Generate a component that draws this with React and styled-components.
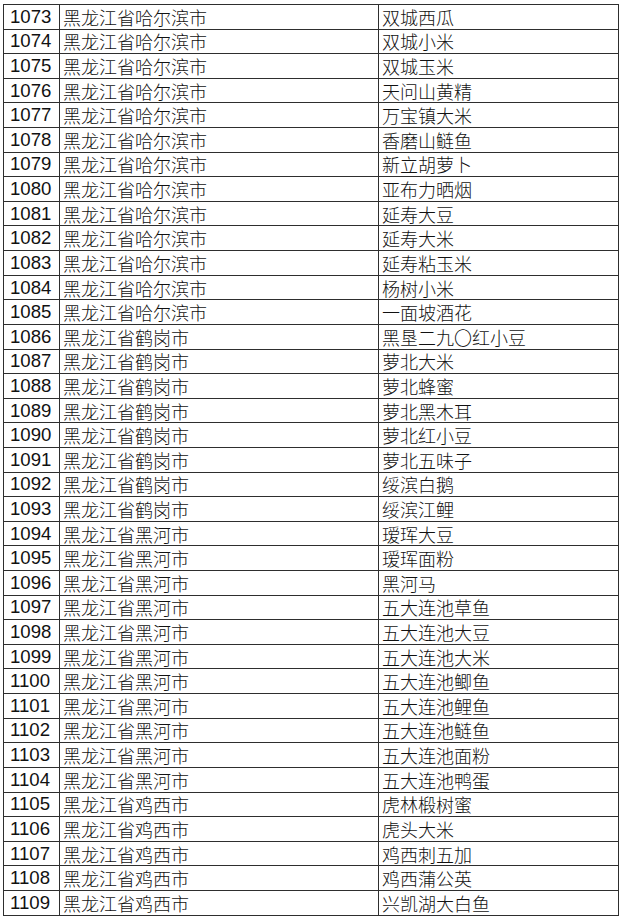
import React from 'react';
import styled, { createGlobalStyle } from 'styled-components';

const GlobalStyle = createGlobalStyle`
  html, body {
    margin: 0;
    padding: 0;
    background: #ffffff;
  }
  body {
    font-family: "Noto Sans CJK SC", "Liberation Sans", sans-serif;
    color: #111;
  }
`;

const Page = styled.div`
  padding: 4px 0 0 3px;
`;

const Table = styled.table`
  border-collapse: collapse;
  table-layout: fixed;
  width: 615px;
`;

const Row = styled.tr`
  height: 24.62px;
`;

const Cell = styled.td`
  border: 1px solid #2e2e2e;
  padding: 0 0 0 ${(p) => p.$pad || 3}px;
  font-size: ${(p) => (p.$num ? 18.6 : 18)}px;
  line-height: 22px;
  white-space: nowrap;
  overflow: hidden;
  vertical-align: middle;
  font-family: ${(p) =>
    p.$num
      ? '"Liberation Sans", Arial, sans-serif'
      : '"Noto Sans CJK SC", "Noto Sans", sans-serif'};
  font-weight: ${(p) => (p.$num ? 400 : 300)};
`;

const groups = [
  ['哈尔滨市', ['双城西瓜', '双城小米', '双城玉米', '天问山黄精', '万宝镇大米', '香磨山鲢鱼', '新立胡萝卜', '亚布力晒烟', '延寿大豆', '延寿大米', '延寿粘玉米', '杨树小米', '一面坡酒花']],
  ['鹤岗市', ['黑垦二九〇红小豆', '萝北大米', '萝北蜂蜜', '萝北黑木耳', '萝北红小豆', '萝北五味子', '绥滨白鹅', '绥滨江鲤']],
  ['黑河市', ['瑷珲大豆', '瑷珲面粉', '黑河马', '五大连池草鱼', '五大连池大豆', '五大连池大米', '五大连池鲫鱼', '五大连池鲤鱼', '五大连池鲢鱼', '五大连池面粉', '五大连池鸭蛋']],
  ['鸡西市', ['虎林椴树蜜', '虎头大米', '鸡西刺五加', '鸡西蒲公英', '兴凯湖大白鱼']],
];

const rows = [];
let n = 1073;
groups.forEach(([city, items]) => {
  items.forEach((item) => {
    rows.push({ id: n++, place: '黑龙江省' + city, name: item });
  });
});

export default function App() {
  return (
    <>
      <GlobalStyle />
      <Page>
        <Table>
          <colgroup>
            <col style={{ width: 56 }} />
            <col style={{ width: 319 }} />
            <col style={{ width: 240 }} />
          </colgroup>
          <tbody>
            {rows.map((r) => (
              <Row key={r.id}>
                <Cell $num $pad={6}>{r.id}</Cell>
                <Cell>{r.place}</Cell>
                <Cell>{r.name}</Cell>
              </Row>
            ))}
          </tbody>
        </Table>
      </Page>
    </>
  );
}
